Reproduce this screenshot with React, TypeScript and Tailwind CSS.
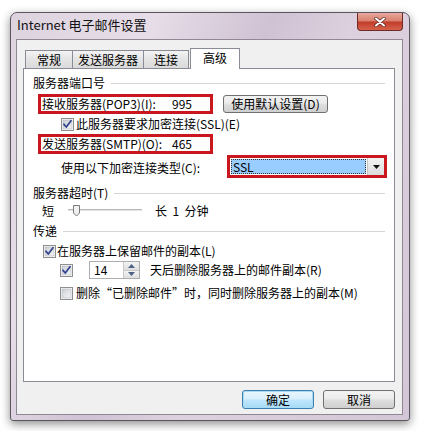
import React from "react";

const FONT = { fontFamily: '"Noto Sans CJK SC", "Liberation Sans", sans-serif' };

function Check({ checked }: { checked: boolean }) {
  return (
    <svg width="13" height="13" viewBox="0 0 13 13" className="shrink-0">
      <defs>
        <linearGradient id="cbg" x1="0" y1="0" x2="1" y2="1">
          <stop offset="0" stopColor="#cbcfd5" />
          <stop offset="1" stopColor="#f6f6f6" />
        </linearGradient>
      </defs>
      <rect x="0.5" y="0.5" width="12" height="12" fill="#fff" stroke="#8e8f8f" />
      <rect x="2" y="2" width="9" height="9" fill="url(#cbg)" stroke="#aeb3b9" strokeWidth="0.6" />
      {checked && (
        <path d="M3 6.3 L5.3 9 L10 2.8" fill="none" stroke="#33468e" strokeWidth="1.8" strokeLinecap="round" strokeLinejoin="round" />
      )}
    </svg>
  );
}

function GroupLabel({ text, className = "" }: { text: string; className?: string }) {
  return (
    <div className={`flex items-center h-[16px] pl-[9px] pr-[9px] ${className}`}>
      <span className="whitespace-nowrap">{text}</span>
      <div className="flex-1 ml-[6px] h-px bg-[#d5d5d5]" />
    </div>
  );
}

function PortRow({ label, value }: { label: string; value: string }) {
  return (
    <div className="flex items-stretch h-[20px] w-[175px] border-[3px] border-[#c9161f]">
      <span className="flex items-center pl-[1px] w-[127px] whitespace-nowrap">{label}</span>
      <span className="flex items-center pl-[4px] flex-1 bg-white">{value}</span>
    </div>
  );
}

const TABS = [
  { label: "常规", w: "w-[48px]" },
  { label: "发送服务器", w: "w-[72px]" },
  { label: "连接", w: "w-[46px]" },
];

export default function App() {
  return (
    <div className="w-[423px] h-[431px] bg-white pt-[12px] pl-[10px] text-[12px] text-black" style={FONT}>
      <div className="w-[400px] h-[409px] flex flex-col rounded-t-[7px] rounded-b-[3px] border border-[#5b5560] bg-[linear-gradient(115deg,#ddd3df_0%,#e6dde8_25%,#cfc2d3_45%,#ddd1df_60%,#d3c6d6_100%)] shadow-[0_3px_10px_rgba(0,0,0,0.45)]">
        {/* title bar */}
        <div className="flex h-[26px] shrink-0">
          <span className="pl-[6px] pt-[3px] text-[13px] leading-[18px] text-[#111]">Internet 电子邮件设置</span>
          <div className="ml-auto mr-[6px] w-[46px] h-[18px] rounded-b-[4px] border border-t-0 border-[#6e2b25] bg-[linear-gradient(#e9a99d_0%,#d9806f_45%,#c23d2a_55%,#d5624c_100%)] flex items-center justify-center">
            <svg width="12" height="10" viewBox="0 0 12 10">
              <path d="M2 1.5 L10 8.5 M10 1.5 L2 8.5" stroke="#5a2a26" strokeWidth="3.4" strokeLinecap="round" />
              <path d="M2 1.5 L10 8.5 M10 1.5 L2 8.5" stroke="#fff" strokeWidth="2" strokeLinecap="round" />
            </svg>
          </div>
        </div>

        {/* client area */}
        <div className="ml-[5px] mr-[6px] mb-[5px] flex-1 flex flex-col bg-[#f0f0f0] border border-[#8f8893] pl-[6px] pt-[7px]">
          {/* tabs */}
          <div className="flex items-end h-[21px] pl-[2px]">
            {TABS.map((t) => (
              <div
                key={t.label}
                className={`${t.w} h-[18px] border border-b-0 border-[#898c95] -ml-px first:ml-0 bg-[linear-gradient(#f3f3f3,#e4e4e4_50%,#dadada)] flex items-center justify-center leading-none`}
              >
                {t.label}
              </div>
            ))}
            <div className="relative z-10 w-[50px] h-[21px] ml-[1px] -mb-px border border-b-0 border-[#898c95] bg-white flex items-center justify-center leading-none pb-[2px]">
              高级
            </div>
          </div>

          {/* panel */}
          <div className="w-[372px] h-[314px] bg-white border border-[#898c95] flex flex-col">
            <GroupLabel text="服务器端口号" className="mt-[6px]" />

            <div className="flex items-center mt-[3px] pl-[14px]">
              <PortRow label="接收服务器(POP3)(I):" value="995" />
              <button className="ml-[10px] w-[105px] h-[18px] rounded-[3px] border border-[#707070] bg-[linear-gradient(#f3f3f3,#ebebeb_45%,#dddddd_55%,#cfcfcf)] leading-none">
                使用默认设置(D)
              </button>
            </div>

            <div className="flex items-center h-[14px] mt-[3px] pl-[37px] gap-[2px]">
              <Check checked />
              <span className="whitespace-nowrap">此服务器要求加密连接(SSL)(E)</span>
            </div>

            <div className="flex mt-[3px] pl-[14px]">
              <PortRow label="发送服务器(SMTP)(O):" value="465" />
            </div>

            <div className="flex items-center h-[23px] mt-[1px] pl-[37px]">
              <span className="w-[166px] whitespace-nowrap mt-[2px]">使用以下加密连接类型(C):</span>
              <div className="flex w-[160px] h-[23px] border-[3px] border-[#c9161f] bg-white">
                <div className="flex-1 m-[1px] bg-[#99ccff] border border-dotted border-[#333] flex items-center pl-[1px] leading-none">
                  SSL
                </div>
                <div className="w-[17px] bg-[linear-gradient(#f2f2f2,#dcdcdc)] border-l border-[#c4c4c4] flex items-center justify-center">
                  <svg width="7" height="4" viewBox="0 0 7 4">
                    <path d="M0 0 H7 L3.5 4 Z" fill="#111" />
                  </svg>
                </div>
              </div>
            </div>

            <GroupLabel text="服务器超时(T)" className="mt-[7px]" />

            <div className="flex items-center h-[16px] mt-[2px] pl-[18px]">
              <span className="w-[26px]">短</span>
              <svg width="75" height="14" viewBox="0 0 75 14" className="shrink-0">
                <rect x="0" y="5" width="74" height="2" fill="#e3e3e3" />
                <rect x="0" y="5" width="74" height="1" fill="#b8b8b8" />
                <path d="M5.5 1.5 H11.5 V9 L8.5 12 L5.5 9 Z" fill="#f0f0f0" stroke="#7a7a7a" />
              </svg>
              <span className="ml-[12px] whitespace-nowrap">长&nbsp;&nbsp;1&nbsp;&nbsp;分钟</span>
            </div>

            <GroupLabel text="传递" className="mt-[4px]" />

            <div className="flex items-center h-[14px] mt-[5px] pl-[19px] gap-[1px]">
              <Check checked />
              <span className="whitespace-nowrap">在服务器上保留邮件的副本(L)</span>
            </div>

            <div className="flex items-center h-[18px] mt-[3px] pl-[36px]">
              <Check checked />
              <div className="ml-[16px] w-[51px] h-[18px] flex border border-[#abadb3] bg-white">
                <span className="flex-1 flex items-center pl-[4px] leading-none">14</span>
                <div className="w-[16px] flex flex-col border-l border-[#c8c8c8]">
                  <div className="flex-1 bg-[linear-gradient(#f4f4f4,#dedede)] border-b border-[#c8c8c8] flex items-center justify-center">
                    <svg width="7" height="4" viewBox="0 0 7 4"><path d="M0 4 H7 L3.5 0 Z" fill="#4d6185" /></svg>
                  </div>
                  <div className="flex-1 bg-[linear-gradient(#f4f4f4,#dedede)] flex items-center justify-center">
                    <svg width="7" height="4" viewBox="0 0 7 4"><path d="M0 0 H7 L3.5 4 Z" fill="#4d6185" /></svg>
                  </div>
                </div>
              </div>
              <span className="ml-[10px] whitespace-nowrap">天后删除服务器上的邮件副本(R)</span>
            </div>

            <div className="flex items-center h-[14px] mt-[7px] pl-[36px] gap-[3px]">
              <Check checked={false} />
              <span className="whitespace-nowrap">删除“已删除邮件”时，同时删除服务器上的副本(M)</span>
            </div>
          </div>

          {/* buttons */}
          <div className="flex justify-end gap-[9px] mt-[8px] pr-[7px]">
            <button className="w-[72px] h-[19px] rounded-[3px] border border-[#3c7fb1] shadow-[0_0_0_1px_#a8dcf3_inset] bg-[linear-gradient(#eaf6fd,#d9f0fc_45%,#bee6fd_55%,#a7d9f5)] leading-none">
              确定
            </button>
            <button className="w-[72px] h-[19px] rounded-[3px] border border-[#707070] bg-[linear-gradient(#f3f3f3,#ebebeb_45%,#dddddd_55%,#cfcfcf)] leading-none">
              取消
            </button>
          </div>
        </div>
      </div>
    </div>
  );
}
